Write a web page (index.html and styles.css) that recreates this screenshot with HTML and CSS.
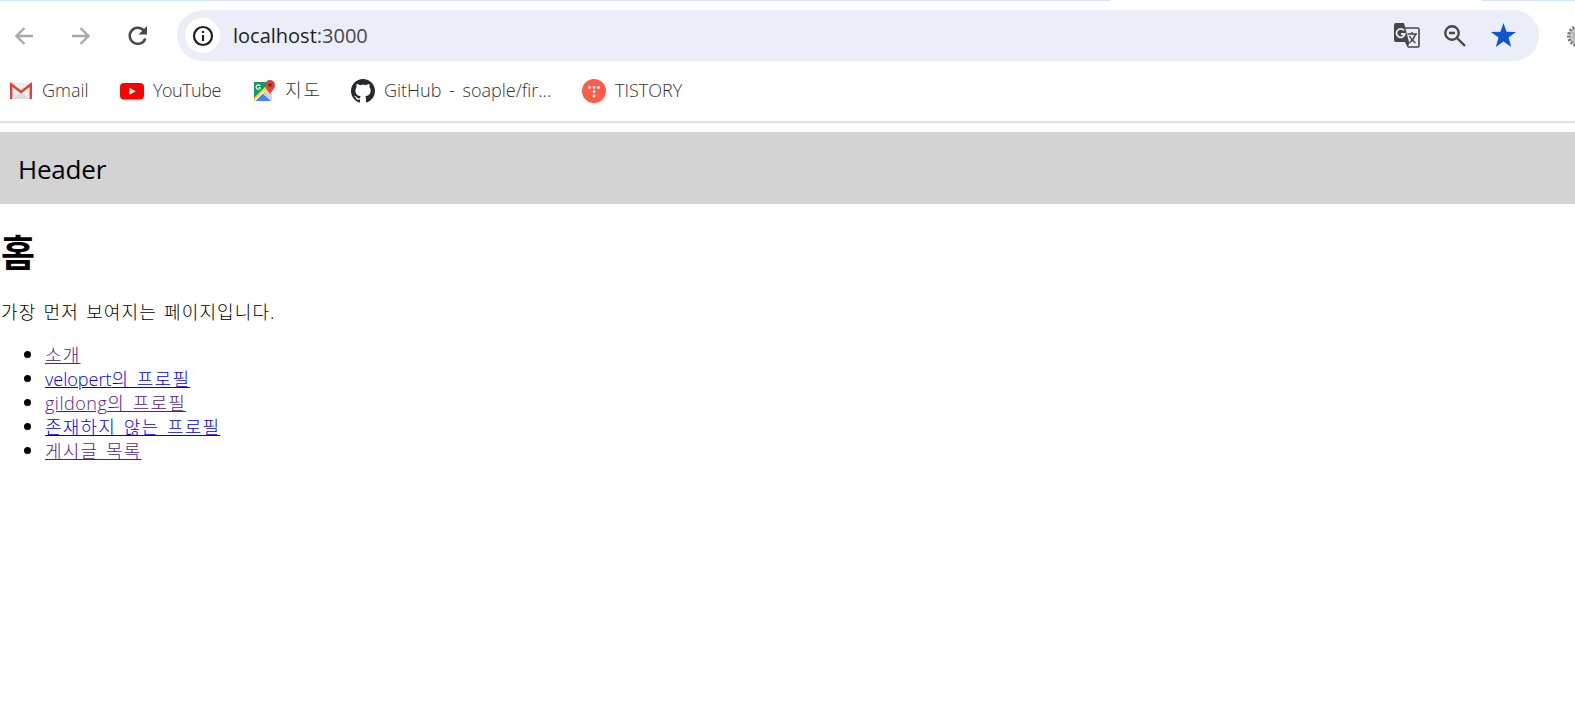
FILE: index.html
```html
<!DOCTYPE html>
<html lang="ko">
<head>
  <meta charset="UTF-8" />
  <meta name="viewport" content="width=device-width, initial-scale=1.0" />
  <title>localhost:3000</title>
  <link rel="stylesheet" href="styles.css">
</head>
<body>

  <div class="browser">
    <div class="tab-edge"><span class="active-tab"></span></div>

    <div class="toolbar">
      <svg class="nav back" viewBox="0 0 18 18"><path d="M18 9H1.5M9.500 1L1.500 9l8 8" /></svg>
      <svg class="nav forward" viewBox="0 0 18 18"><path d="M0 9h16.500M8.500 1l8 8-8 8" /></svg>
      <svg class="nav reload" viewBox="0 0 20 20"><path d="M17.300 12.500A8 8 0 1 1 16 4.800" /><path class="tip" d="M19 0v8.500h-8.500z" /></svg>

      <div class="address">
        <span class="info">
          <svg width="22" height="22" viewBox="0 0 22 22"><circle cx="11" cy="11" r="9" fill="none" stroke="#1f1f1f" stroke-width="2.200" /><path d="M11 10v6M11 6v2" stroke="#1f1f1f" stroke-width="2.200" /></svg>
        </span>
        <span class="url">localhost<span class="port">:3000</span></span>
        <svg class="translate" viewBox="0 0 26 26">
          <path d="M10 5h13.500a1.500 1.500 0 0 1 1.500 1.500v16a1.500 1.500 0 0 1-1.500 1.500H14" fill="none" stroke="#474747" stroke-width="1.600" />
          <path d="M2 0h8l5 19H2a2 2 0 0 1-2-2V2a2 2 0 0 1 2-2zM11 19h5l-2.500 5.500z" fill="#474747" />
          <path d="M10 7.500A4.200 4.200 0 1 0 10.800 11H7" fill="none" stroke="#edeff8" stroke-width="1.800" />
          <path d="M13.500 11h9.500M18 9v2M21.500 11c-1 4-3 6-5.500 8.500M15.500 13c1.500 3 3.500 5 6 7" fill="none" stroke="#474747" stroke-width="1.500" />
        </svg>
        <svg class="magnify" viewBox="0 0 22 22"><circle cx="8" cy="8" r="6.700" /><path d="M13 13l8 8M5 8h6" /></svg>
        <svg class="star" viewBox="0 0 24 23"><path d="M12 0l2.900 8.300 9.100.2-7.200 5.500 2.600 9L12 17.800 4.600 23l2.600-9L0 8.500l9.100-.2z" fill="#0b57d0" /></svg>
      </div>

      <svg class="extension" viewBox="0 0 22 22"><circle cx="11" cy="11" r="9" fill="#b5b5b5" /><circle cx="11" cy="11" r="9.500" fill="none" stroke="#777" stroke-width="3" stroke-dasharray="2 1.500" /><circle cx="11" cy="11" r="6.500" fill="none" stroke="#ddd" stroke-width="1.500" stroke-dasharray="2 2" /></svg>
    </div>

    <div class="bookmarks">
      <a class="bookmark gmail">
        <svg width="24" height="24" viewBox="0 0 24 24">
          <path d="M2 4h20v16H2z" fill="#eee" /><path d="M4 20l8-8 8 8z" fill="#ddd" />
          <path d="M2.200 20V5.500L12 13l9.800-7.500V20" fill="none" stroke="#db4437" stroke-width="2.400" />
        </svg>
        <span>Gmail</span>
      </a>
      <a class="bookmark youtube">
        <svg width="24" height="24" viewBox="0 0 24 24"><rect y="4" width="24" height="16.500" rx="4" fill="#f00" /><path d="M9.500 8.700v7l6.200-3.500z" fill="#fff" /></svg>
        <span>YouTube</span>
      </a>
      <a class="bookmark maps">
        <svg width="24" height="24" viewBox="0 0 24 24">
          <path d="M2 3h18v19H2z" fill="#d8d8d8" />
          <path d="M2 3h14v6L2 20z" fill="#109d59" />
          <path d="M2 19L14 7l3 3L5 22H2z" fill="#ffd94c" />
          <path d="M3 22l8.500-8.500L20 22z" fill="#4285f4" />
          <path d="M10 13.300l10 9M3 22l10-10" fill="none" stroke="#fff" />
          <path d="M8.500 8.500H6.700M8.300 7a2.200 2.200 0 1 0 .2 1.600" fill="none" stroke="#fff" stroke-width="1.100" />
          <path d="M18 16c0-4-5-5-5-10a5 5 0 0 1 10 0c0 5-5 6-5 10z" fill="#db4437" /><circle cx="18" cy="6" r="1.800" fill="#7b231e" />
        </svg>
        <span>지도</span>
      </a>
      <a class="bookmark github">
        <svg width="24" height="24" viewBox="0 0 16 16"><path fill="#24292f" d="M8 0C3.580 0 0 3.580 0 8c0 3.540 2.290 6.530 5.470 7.590.4.070.55-.17.55-.38 0-.19-.01-.82-.01-1.490-2.010.37-2.530-.49-2.690-.94-.09-.23-.48-.94-.82-1.130-.28-.15-.68-.52-.01-.53.63-.01 1.080.58 1.230.82.72 1.210 1.870.87 2.330.66.070-.52.280-.87.510-1.070-1.780-.2-3.640-.89-3.640-3.950 0-.87.310-1.590.82-2.150-.08-.2-.36-1.020.08-2.120 0 0 .67-.21 2.200.82.64-.18 1.320-.27 2-.27s1.360.09 2 .27c1.530-1.040 2.200-.82 2.200-.82.440 1.100.16 1.920.08 2.120.51.560.82 1.270.82 2.150 0 3.070-1.870 3.750-3.650 3.950.29.250.54.730.54 1.480 0 1.070-.01 1.930-.01 2.200 0 .21.150.46.550.38A8.010 8.010 0 0 0 16 8c0-4.420-3.580-8-8-8z" /></svg>
        <span>GitHub - soaple/fir...</span>
      </a>
      <a class="bookmark tistory">
        <svg width="24" height="24" viewBox="0 0 24 24"><circle cx="12" cy="12" r="12" fill="#ff5a4a" /><g fill="#fff"><circle cx="7.500" cy="8.500" r="1.400" /><circle cx="12" cy="8.500" r="1.400" /><circle cx="16.500" cy="8.500" r="1.400" /><circle cx="12" cy="12.700" r="1.400" /><circle cx="12" cy="17" r="1.400" /></g></svg>
        <span>TISTORY</span>
      </a>
    </div>
  </div>

  <header>Header</header>

  <main>
    <h1>홈</h1>
    <p>가장 먼저 보여지는 페이지입니다.</p>
    <ul>
      <li><a href="#about" class="visited">소개</a></li>
      <li><a href="#velopert"><span class="latin">velopert</span>의 프로필</a></li>
      <li><a href="#gildong" class="visited"><span class="latin wide">gildong</span>의 프로필</a></li>
      <li><a href="#void">존재하지 않는 프로필</a></li>
      <li><a href="#articles" class="visited">게시글 목록</a></li>
    </ul>
  </main>

</body>
</html>
```
FILE: styles.css
```css
body {
  margin: 0;
  background: #fff;
  color: #000;
  font-family: "Open Sans", "Noto Sans CJK KR", sans-serif;
  font-weight: 300;
  font-size: 18px;
  overflow: hidden;
}

svg {
  display: block;
  flex: none;
}

.browser {
  height: 121px;
  border-bottom: 2px solid #e1e1e1;
}

.tab-edge {
  height: 1px;
  background: #d3e3fd;
}

.active-tab {
  display: block;
  width: 372px;
  height: 1px;
  margin-left: 1110px;
  background: #fff;
}

.toolbar {
  display: flex;
  align-items: center;
  height: 51px;
  padding-top: 9px;
}

.nav {
  width: 18px;
  height: 18px;
  fill: none;
  stroke: #a9a9a9;
  stroke-width: 2.4;
}

.back {
  margin-left: 15px;
}

.forward {
  margin-left: 39px;
}

.reload {
  width: 20px;
  height: 20px;
  margin-left: 38px;
  stroke: #474747;
  stroke-width: 2.5;
}

.tip {
  fill: #474747;
  stroke: none;
}

.address {
  display: flex;
  align-items: center;
  box-sizing: border-box;
  width: 1362px;
  height: 51px;
  margin-left: 29px;
  padding: 0 23px 0 8px;
  border-radius: 26px;
  background: #ebeef8;
  flex: none;
}

.info {
  display: flex;
  align-items: center;
  justify-content: center;
  width: 35px;
  height: 35px;
  border-radius: 50%;
  background: #fff;
}

.url {
  flex: 1;
  margin-left: 13px;
  font-size: 20px;
  font-weight: 400;
  color: #1f1f1f;
}

.port {
  color: #474747;
}

.translate {
  width: 26px;
  height: 26px;
}

.magnify {
  width: 22px;
  height: 22px;
  margin-left: 24px;
  fill: none;
  stroke: #474747;
  stroke-width: 2.4;
}

.star {
  width: 25px;
  height: 24px;
  margin: -2px 0 0 25px;
}

.extension {
  width: 22px;
  height: 22px;
  margin-left: 28px;
}

.bookmarks {
  display: flex;
  height: 60px;
  padding-left: 9px;
}

.bookmark {
  display: flex;
  align-items: center;
  gap: 9px;
  white-space: nowrap;
  color: #333;
}

.bookmark span {
  margin-top: -2px;
}

.gmail {
  width: 111px;
}

.youtube {
  width: 132px;
  letter-spacing: -0.5px;
}

.maps {
  width: 99px;
  letter-spacing: 2px;
}

.maps span {
  margin-top: -4px;
}

.github {
  width: 231px;
  word-spacing: 3px;
}

header {
  box-sizing: border-box;
  height: 72px;
  margin-top: 9px;
  padding: 18px;
  background: #d3d3d3;
  font-size: 26px;
  font-weight: 400;
  line-height: 38px;
  letter-spacing: -0.2px;
}

h1 {
  margin: 25px 0 23px 1px;
  font-size: 37px;
  line-height: 48px;
  font-weight: 700;
}

p {
  margin: 0 0 0 1px;
  line-height: 24px;
  letter-spacing: 1.1px;
  word-spacing: 1.5px;
}

ul {
  margin: 19px 0;
  padding-left: 45px;
}

li {
  height: 24px;
  line-height: 24px;
  letter-spacing: 1.2px;
  word-spacing: 1.8px;
}

li::marker {
  font-size: 20px;
}

.latin {
  letter-spacing: 0;
}

.wide {
  letter-spacing: 0.5px;
}

li a {
  color: #00e;
}

li .visited {
  color: #551a8b;
}
```
